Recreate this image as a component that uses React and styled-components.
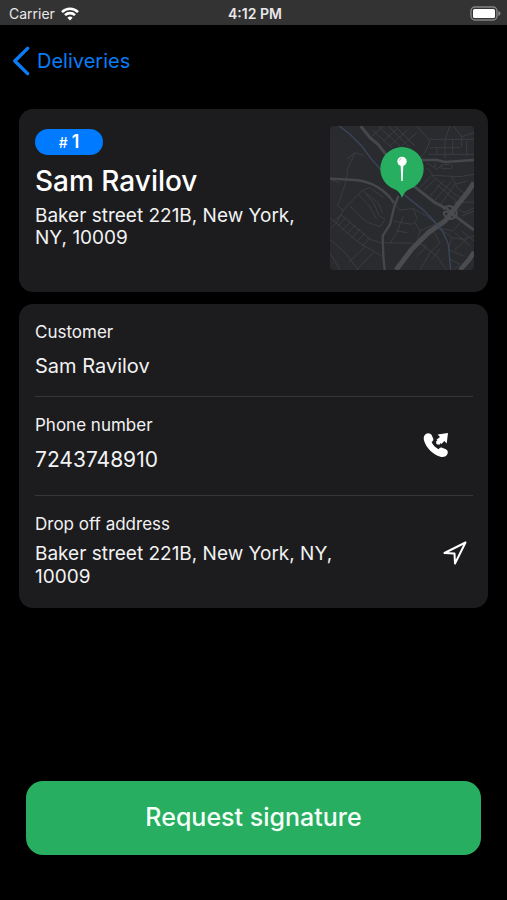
import React from "react";
import styled, { createGlobalStyle } from "styled-components";

const GlobalStyle = createGlobalStyle`
  *, *::before, *::after { box-sizing: border-box; }
  body {
    margin: 0;
    background: #000;
    color: #f2f2f3;
    font-family: Inter, "Liberation Sans", sans-serif;
  }
  h1, h2, p { margin: 0; font-weight: 400; }
`;

const Screen = styled.div`
  min-height: 100vh;
  display: flex;
  flex-direction: column;
`;

const StatusBar = styled.header`
  display: grid;
  grid-template-columns: 1fr auto 1fr;
  align-items: center;
  height: 25px;
  padding: 2px 6px 0 9px;
  background: #333;
  color: #e8e8e8;
  font-size: 14px;
`;

const Carrier = styled.span`
  display: flex;
  align-items: center;
  gap: 6px;
`;

const Clock = styled.time`
  font-weight: 600;
`;

const Battery = styled.svg`
  justify-self: end;
`;

const NavBar = styled.nav`
  display: flex;
  padding: 20px 12px 0;
  height: 84px;
  align-items: flex-start;
`;

const BackLink = styled.a`
  display: flex;
  align-items: center;
  gap: 7px;
  height: 32px;
  color: #0a7cf5;
  font-size: 20px;
  text-decoration: none;
`;

const Main = styled.main`
  flex: 1;
  display: flex;
  flex-direction: column;
  gap: 12px;
  padding: 0 19px;
`;

const Card = styled.section`
  border-radius: 14px;
  background: #1c1c1e;
`;

const SummaryCard = styled(Card)`
  display: flex;
  justify-content: space-between;
  gap: 16px;
  padding: 17px 14px 22px 16px;
`;

const Summary = styled.div`
  flex: 1;
  display: flex;
  flex-direction: column;
  align-items: flex-start;
  padding-top: 3px;
`;

const Badge = styled.span`
  display: flex;
  align-items: baseline;
  justify-content: center;
  gap: 4px;
  width: 68px;
  height: 26px;
  border-radius: 13px;
  background: #007aff;
  color: #fff;
  font-size: 18px;
  font-weight: 600;
  line-height: 26px;
`;

const Hash = styled.small`
  font-size: 14px;
  font-weight: 500;
`;

const Name = styled.h1`
  && { font-weight: 500; margin-top: 8px; }
  color: #fff;
  font-size: 28px;
  line-height: 36px;
`;

const Address = styled.p`
  && { margin-top: 6px; }
  font-size: 19px;
  line-height: 22px;
`;

const Map = styled.svg`
  flex: none;
  width: 144px;
  height: 144px;
  border-radius: 4px;
`;

const Details = styled(Card)`
  padding: 0 15px 0 16px;
`;

const DetailRow = styled.div`
  display: flex;
  align-items: center;
  justify-content: space-between;
  padding: 16px 0 ${({ $bottom }) => $bottom};

  & + & {
    border-top: 1px solid #363638;
  }
`;

const Field = styled.div`
  flex: 1;
  max-width: 320px;
`;

const Label = styled.h2`
  font-size: 17px;
  line-height: 24px;
`;

const Value = styled.p`
  && { margin-top: ${({ $multi }) => ($multi ? "6px" : "11px")}; }
  font-size: ${({ $size }) => $size || "20px"};
  line-height: 23px;
`;

const IconButton = styled.button`
  display: flex;
  margin: 6px ${({ $inset }) => $inset} 0 0;
  padding: 0;
  border: 0;
  background: none;
  color: #fff;
`;

const Footer = styled.footer`
  padding: 0 26px 45px;
`;

const PrimaryButton = styled.button`
  width: 100%;
  height: 74px;
  border: 0;
  padding: 0 0 2px;
  border-radius: 17px;
  background: #27ae60;
  color: #f4fff8;
  font: 500 25px Inter, "Liberation Sans", sans-serif;
`;

function WifiIcon() {
  return (
    <svg width="18" height="14" viewBox="0 0 18 14" fill="none" stroke="#fff" strokeWidth="2.6" aria-hidden="true">
      <path d="M1 5.1C5.5.6 12.5.6 17 5.1" />
      <path d="M4 8.2C6.8 5.4 11.2 5.4 14 8.2" />
      <path d="M6.4 10.700C7.800 9.200 10.200 9.200 11.600 10.700L9 13.400Z" fill="#fff" stroke="none" />
    </svg>
  );
}

function BatteryIcon() {
  return (
    <Battery width="31" height="15" viewBox="0 0 31 15" aria-hidden="true">
      <rect x="1" y="1" width="26" height="13" rx="4" fill="#333" stroke="#858585" strokeWidth="1.4" />
      <rect x="3" y="3" width="22" height="9" rx="1.5" fill="#fff" />
      <path d="M28.3 5Q30.6 5.6 30.6 7.5T28.3 10Z" fill="#858585" />
    </Battery>
  );
}

function ChevronIcon() {
  return (
    <svg width="18" height="30" viewBox="0 0 18 30" fill="none" stroke="currentColor" strokeWidth="3.4" strokeLinecap="round" strokeLinejoin="round" aria-hidden="true">
      <path d="M15.6 2.4L2.8 15L15.6 27.6" />
    </svg>
  );
}

function PhoneIcon() {
  return (
    <svg width="26" height="26" viewBox="0 0 26 26" fill="currentColor" aria-hidden="true">
      <path d="M3.2 1.8C5 .6 7.500 1.200 8.600 3.100L10.200 6.600C10.600 7.800 10.200 8.800 9.300 9.600L8.600 10.300C10 13.200 12.400 15.600 15.500 17.200L16.200 16.500C17 15.600 18 15.400 19.200 15.800L22.900 17.300C24.900 18.100 25.400 20.700 24.200 22.600C22.500 25 20 25.500 17.500 24.800C9.400 22.300 3.400 16 1 8.400C.3 5.700 .9 3.300 3.200 1.800Z" />
      <path d="M25 .9L23.700 11.600L21.400 9.100L18.400 11.900L17.200 10.900L17 12.600H14.300L13.200 11.400V8.900L14.500 8.700L13.500 7.700L17 4.900L14.600 2.500Z" />
    </svg>
  );
}

function NavigateIcon() {
  return (
    <svg width="24" height="24" viewBox="0 0 24 24" fill="none" stroke="currentColor" strokeWidth="2" strokeLinejoin="round" aria-hidden="true">
      <path d="M22.500 1.500L1.500 12L11.500 12.500L12 22.500Z" />
    </svg>
  );
}

function DeliveryMap() {
  return (
    <Map viewBox="30 30 432 432" role="img" aria-label="Map of the drop off address">
      <rect x="30" y="30" width="432" height="432" fill="#292b2f" />
      <g fill="none" stroke="#3b3d41" strokeWidth="3">
        <path d="M80 130L105 110L130 118M105 110L82 160L80 190L60 250L52 270L70 282L50 320L30 340M70 282L110 240L128 222L150 215L190 245M128 222L160 260L178 300L195 310L180 332L140 318L90 270M115 236L148 270L170 310M140 232L175 262L188 290M30 190L60 200" />
        <path d="M30 305L110 375L150 400L185 420M30 370L75 410L115 462M30 410L60 462M42 316L62 296M54 330L78 304M66 344L92 316M80 355L106 327M94 367L120 338M110 378L134 352M126 390L150 364M62 296L150 370L180 380L290 382M85 440L135 392M110 462L160 410" />
        <path d="M160 45L215 95M175 30L240 90M205 30L270 95M225 30L285 90M190 75L235 35M210 90L262 42M240 95L290 50M155 62L190 30M290 30L330 75L315 110L300 125M330 70H462M330 95H420M325 115H462M375 70V125M398 70V115M375 70L390 30M400 30L425 62L462 50M425 62V92M350 95V115M440 75V120M320 140L350 160L370 145H390M345 140V155M365 145V158H395V145" />
        <path d="M300 215L335 178L420 182L462 175M312 222L350 186M330 240L372 192M345 252L395 195M362 264L405 205L440 195M335 178L405 235L430 250M350 205L412 258M395 180L415 220L440 235M320 155L340 178M400 260L462 258M415 280L435 290L462 275M425 300L462 285" />
        <path d="M215 260L240 282L280 278L292 310L275 325L220 315M250 300L230 350L210 382M230 345L262 350M285 320L300 345L290 380L320 392M280 278L320 300L350 325M300 345L345 325M340 345L360 380L330 410L300 462M300 382L350 420L380 462M320 392L290 420M360 400L335 430M365 340L395 365L430 370L462 360M395 365L385 400L430 420M405 350L450 390M425 345L462 375M405 400L440 370M390 430L420 445L400 462M420 320L400 345L350 335" />
      </g>
      <g fill="none" stroke="#45474b" strokeWidth="7">
        <path d="M30 188L105 192C150 196 190 215 222 260M235 240L222 275L210 325L188 360L190 420L194 462M295 132L350 132L375 138L462 132" />
        <path d="M122 30L150 65L175 86L205 125L240 175L290 217L345 260L380 278L412 305L462 342" strokeWidth="9" />
      </g>
      <g fill="none" stroke="#4a4b4f">
        <path d="M462 200L442 230L410 270L375 315L325 350L275 400L228 462" strokeWidth="15" />
        <path d="M370 280C385 260 410 275 410 292S385 315 375 300S375 280 405 302" strokeWidth="6" />
        <path d="M462 408L448 430L420 462" strokeWidth="14" />
      </g>
      <path d="M58 30L90 55L125 90L155 130L195 175L245 230L310 282L345 318L370 350L385 385L392 462" fill="none" stroke="#3c465b" strokeWidth="4" />
      <path d="M246 93A65 65 0 0 1 311 158C311 188 292 210 270 219C256 225 252 231 246 246C240 231 236 225 222 219C200 210 181 188 181 158A65 65 0 0 1 246 93Z" fill="#27ae60" />
      <path d="M242 148H250L248 195H244Z" fill="#fff" />
      <circle cx="246" cy="136" r="14" fill="#fff" />
      <path d="M238 134Q239 129 244 128" fill="none" stroke="#8ed0a8" strokeWidth="3" />
    </Map>
  );
}

export default function App() {
  return (
    <Screen>
      <GlobalStyle />
      <StatusBar>
        <Carrier>Carrier <WifiIcon /></Carrier>
        <Clock>4:12 PM</Clock>
        <BatteryIcon />
      </StatusBar>
      <NavBar>
        <BackLink href="#deliveries"><ChevronIcon />Deliveries</BackLink>
      </NavBar>
      <Main>
        <SummaryCard>
          <Summary>
            <Badge><Hash>#</Hash>1</Badge>
            <Name>Sam Ravilov</Name>
            <Address>Baker street 221B, New York, NY, 10009</Address>
          </Summary>
          <DeliveryMap />
        </SummaryCard>
        <Details>
          <DetailRow $bottom="18px">
            <Field>
              <Label>Customer</Label>
              <Value>Sam Ravilov</Value>
            </Field>
          </DetailRow>
          <DetailRow $bottom="24px">
            <Field>
              <Label>Phone number</Label>
              <Value $size="21px">7243748910</Value>
            </Field>
            <IconButton type="button" aria-label="Call customer" $inset="24px"><PhoneIcon /></IconButton>
          </DetailRow>
          <DetailRow $bottom="20px">
            <Field>
              <Label>Drop off address</Label>
              <Value $multi $size="19px">Baker street 221B, New York, NY, 10009</Value>
            </Field>
            <IconButton type="button" aria-label="Navigate to address" $inset="6px"><NavigateIcon /></IconButton>
          </DetailRow>
        </Details>
      </Main>
      <Footer>
        <PrimaryButton type="button">Request signature</PrimaryButton>
      </Footer>
    </Screen>
  );
}
